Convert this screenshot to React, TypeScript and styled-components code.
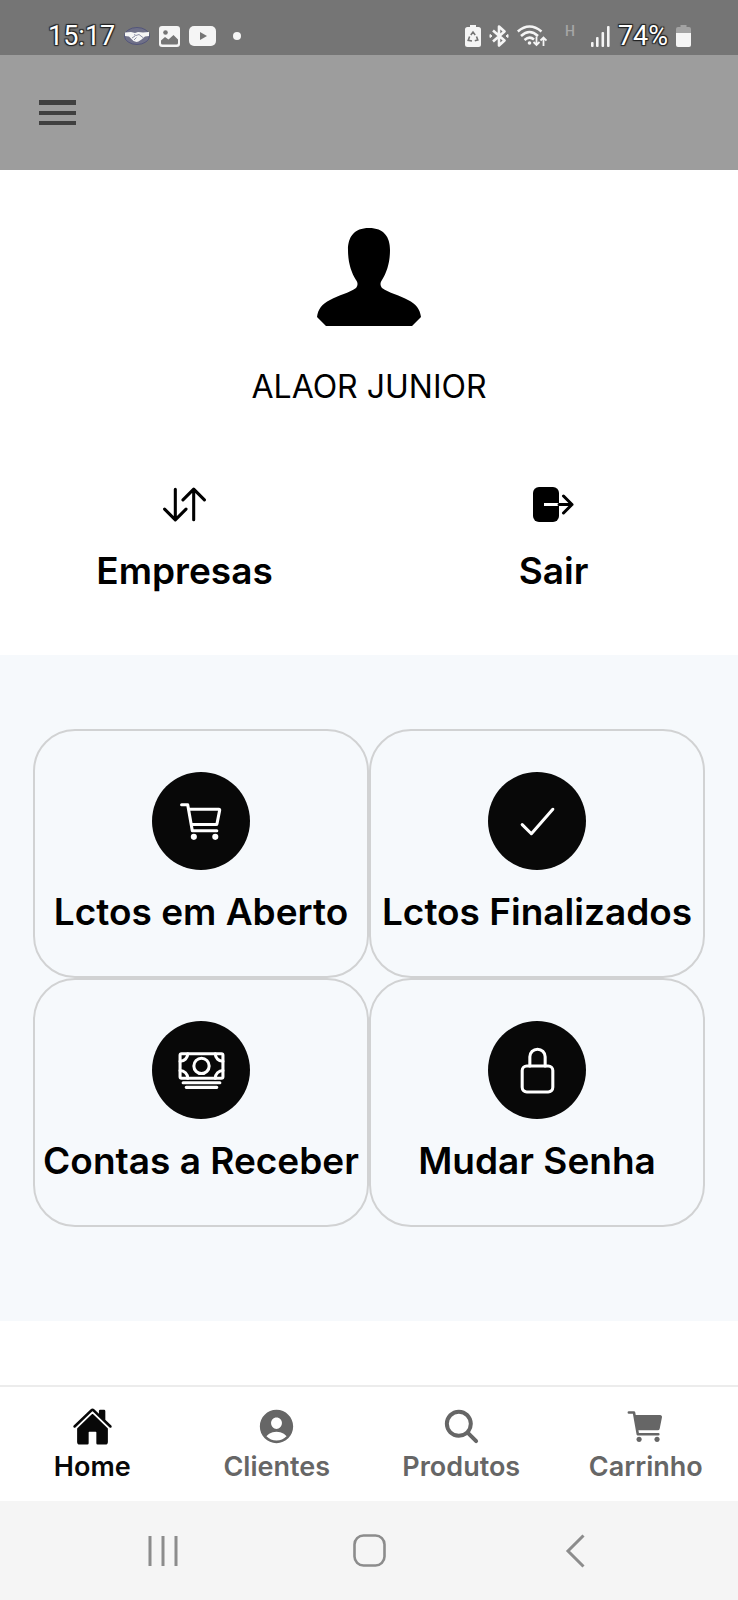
import React from 'react';
import styled, { createGlobalStyle } from 'styled-components';
import {
  IoCart,
  IoCartOutline,
  IoCashOutline,
  IoCheckmarkOutline,
  IoHome,
  IoLockClosedOutline,
  IoPersonCircle,
  IoSearch,
  IoSwapVertical,
} from 'react-icons/io5';

const GlobalStyle = createGlobalStyle`
  *, *::before, *::after { box-sizing: border-box; }
  body { margin: 0; background: #fff; font-family: Inter, Roboto, sans-serif; color: #000; }
  button { font: inherit; color: inherit; background: none; border: 0; padding: 0; margin: 0; cursor: pointer; }
  svg { display: block; flex-shrink: 0; }
`;

const Screen = styled.div`
  display: flex;
  flex-direction: column;
  min-height: 100vh;
`;

const StatusBar = styled.div`
  display: flex;
  justify-content: space-between;
  align-items: flex-end;
  height: 55px;
  padding: 0 47px 4px 48px;
  background: #757575;
  color: #f5f5f5;
`;

const StatusGroup = styled.div<{ $gap: number }>`
  display: flex;
  align-items: center;
  gap: ${({ $gap }) => $gap}px;
  height: 30px;
`;

const StatusText = styled.span`
  font: 400 27px/30px Roboto, sans-serif;
  color: #fff;
  text-shadow: 1px 1px 1px #222, -1px -1px 1px #222, 1px -1px 1px #222, -1px 1px 1px #222;
`;

const NetworkType = styled.span`
  align-self: flex-start;
  padding: 0 8px 0 10px;
  font: 500 14px/20px Roboto, sans-serif;
  color: #a6a6a6;
`;

const MoreDot = styled.span`
  width: 8px;
  height: 8px;
  margin-left: 8px;
  border-radius: 50%;
  background: #f5f5f5;
`;

const Header = styled.header`
  display: flex;
  align-items: center;
  height: 115px;
  padding: 0 39px;
  background: #9d9d9d;
  color: #404040;
`;

const Profile = styled.section`
  display: flex;
  flex-direction: column;
  align-items: center;
  padding-top: 58px;
`;

const UserName = styled.h1`
  margin: 41px 0 0;
  font-size: 32px;
  line-height: 40px;
  font-weight: 400;
`;

const ProfileActions = styled.div`
  display: flex;
  align-self: stretch;
  margin-top: 73px;
  padding-bottom: 62px;
`;

const ActionButton = styled.button`
  display: flex;
  flex: 1;
  flex-direction: column;
  align-items: center;
  gap: 20px;
`;

const Label = styled.span`
  font-size: 37px;
  line-height: 44px;
  font-weight: 600;
  white-space: nowrap;
`;

const Shortcuts = styled.section`
  display: grid;
  grid-template-columns: 1fr 1fr;
  padding: 74px 33px 94px;
  background: #f6f9fc;
`;

const ShortcutCard = styled.button`
  display: flex;
  flex-direction: column;
  align-items: center;
  gap: 20px;
  min-width: 0;
  && {
    padding: 41px 0 42px;
    border: 2px solid #d1d2d3;
  }
  border-radius: 42px;
`;

const IconCircle = styled.span`
  display: flex;
  align-items: center;
  justify-content: center;
  width: 98px;
  height: 98px;
  border-radius: 50%;
  background: #080808;
  color: #fff;
`;

const TabBar = styled.nav`
  display: flex;
  height: 116px;
  margin-top: auto;
  border-top: 2px solid #ececec;
`;

const Tab = styled.button<{ $active?: boolean }>`
  display: flex;
  flex: 1;
  flex-direction: column;
  align-items: center;
  && {
    padding-top: 19px;
    color: ${({ $active }) => ($active ? '#080808' : '#666')};
  }
`;

const TabLabel = styled.span`
  font-size: 27px;
  line-height: 40px;
  font-weight: 600;
`;

const SystemBar = styled.div`
  display: flex;
  height: 99px;
  padding: 0 60px;
  background: #f5f5f5;
`;

const SystemButton = styled.button`
  display: flex;
  flex: 1;
  align-items: center;
  justify-content: center;
`;

const HandshakeIcon = () => (
  <svg width="26" height="18" viewBox="0 0 26 18">
    <ellipse cx="13" cy="9" rx="12.5" ry="8.5" fill="#6f7088" stroke="#53557a" />
    <path d="M1 5.500 7 5l4 1 3-1 5 .6 6-.6v4l-4 .5-3.500 3-3 2-2 .5-3-1-3-3L5 9.500l-4-.5z" fill="#f5f5f5" />
    <path d="m8 11 3-2m-1 4 2.500-2.500M10 7.500l2 1 3-1 4.500 3.500" fill="none" stroke="#8f91a8" />
  </svg>
);

const PictureIcon = () => (
  <svg width="21" height="21" viewBox="0 0 21 21">
    <rect width="21" height="21" rx="3" fill="#f5f5f5" />
    <circle cx="6.5" cy="6.5" r="2.3" fill="#757575" />
    <path d="M2 17v-2.500l4-3.500 3.500 2.500L14.500 9l4.500 4.500V17q0 1.500-1.500 1.500h-14Q2 18.500 2 17z" fill="#757575" />
  </svg>
);

const VideoIcon = () => (
  <svg width="27" height="20" viewBox="0 0 27 20">
    <rect width="27" height="20" rx="5" fill="#f5f5f5" />
    <path d="m11 6 7 4-7 4z" fill="#757575" />
  </svg>
);

const RecycleBatteryIcon = () => (
  <svg width="16" height="22" viewBox="0 0 16 22">
    <path d="M5 0h6v2h2.500Q16 2 16 4.500v15q0 2.500-2.500 2.500h-11Q0 22 0 19.500v-15Q0 2 2.500 2H5z" fill="#f5f5f5" />
    <path d="M5.800 10 8 7l2.200 3M11.500 11.500l1.300 3.500-3 .8M7 16l-3.800-.6 1.400-4" fill="none" stroke="#757575" strokeWidth="1.6" />
  </svg>
);

const BluetoothIcon = () => (
  <svg width="20" height="22" viewBox="0 0 20 22" fill="none" stroke="#f5f5f5" strokeWidth="2.6">
    <path d="m4 5.500 11.500 10L10 20.500v-19l5.500 5L4 16.500" strokeLinejoin="round" />
    <path d="M1 9.500 3 11l-2 1.500zM19 9.500 17 11l2 1.500z" strokeWidth="1" fill="#f5f5f5" />
  </svg>
);

const WifiIcon = () => (
  <svg width="30" height="22" viewBox="0 0 30 22" fill="none" stroke="#f5f5f5" strokeWidth="2.5">
    <path d="M.8 6.500Q12.500-3.500 24.500 6.500M4 11Q12.500 3 21 11M7.500 15q5-4.500 9.500-.5" />
    <circle cx="12.5" cy="18" r="1.8" fill="#f5f5f5" stroke="none" />
    <path d="M19.500 11.500V20m-3-3 3 3 3-3M26.500 21v-8.500m-3 3 3-3 3 3" strokeWidth="1.8" />
  </svg>
);

const SignalIcon = () => (
  <svg width="19" height="21" viewBox="0 0 19 21" fill="#f5f5f5">
    <rect y="16" width="2.6" height="5" rx="1" />
    <rect x="5" y="11" width="2.6" height="10" rx="1" />
    <rect x="10.5" y="6" width="2.6" height="15" rx="1" />
    <rect x="16" width="2.6" height="21" rx="1" />
  </svg>
);

const BatteryIcon = () => (
  <svg width="15" height="22" viewBox="0 0 15 22">
    <path d="M4.500 0h6v2H13q2 0 2 2v5H0V4q0-2 2-2h2.500z" fill="#a3a3a3" />
    <path d="M0 8h15v12q0 2-2 2H2q-2 0-2-2z" fill="#f5f5f5" />
  </svg>
);

const MenuIcon = () => (
  <svg width="37" height="26" viewBox="0 0 37 26" fill="currentColor">
    <rect width="37" height="5" />
    <rect y="11" width="37" height="4" />
    <rect y="21" width="37" height="4" />
  </svg>
);

const AvatarIcon = () => (
  <svg width="104" height="98" viewBox="0 0 104 98">
    <path d="M52 0C67 0 73 9 73 22c0 12-3 22-8 30-2 3-2 5 0 8 7 5 17 7 26 12 8 4 12 9 13 17l-9 9H9l-9-9c1-8 5-13 13-17 9-5 19-7 26-12 2-3 2-5 0-8-5-8-8-18-8-30C31 9 37 0 52 0z" />
  </svg>
);

const ExitIcon = () => (
  <svg width="41" height="49" viewBox="0 0 41 49">
    <rect y="7" width="26" height="35" rx="6" />
    <path d="M11 24.500h15" stroke="#fff" strokeWidth="3" />
    <path d="M26 24.500h13M30.500 16l8.500 8.500-8.500 8.500" fill="none" stroke="#000" strokeWidth="3" strokeLinecap="round" strokeLinejoin="round" />
  </svg>
);

const RecentsIcon = () => (
  <svg width="30" height="32" viewBox="0 0 30 32" stroke="#8c8c8c" strokeWidth="3">
    <path d="M2 1v30M15 1v30M28 1v30" />
  </svg>
);

const HomeKeyIcon = () => (
  <svg width="33" height="33" viewBox="0 0 33 33">
    <rect x="1.5" y="1.5" width="30" height="30" rx="9" fill="none" stroke="#8c8c8c" strokeWidth="2.6" />
  </svg>
);

const BackIcon = () => (
  <svg width="20" height="34" viewBox="0 0 20 34">
    <path d="M18.500 1.500 3 17l15.500 15.500" fill="none" stroke="#8c8c8c" strokeWidth="3" />
  </svg>
);

const shortcuts = [
  { label: 'Lctos em Aberto', Icon: IoCartOutline },
  { label: 'Lctos Finalizados', Icon: IoCheckmarkOutline },
  { label: 'Contas a Receber', Icon: IoCashOutline },
  { label: 'Mudar Senha', Icon: IoLockClosedOutline },
];

const tabs = [
  { label: 'Home', Icon: IoHome, active: true },
  { label: 'Clientes', Icon: IoPersonCircle },
  { label: 'Produtos', Icon: IoSearch },
  { label: 'Carrinho', Icon: IoCart },
];

export default function App() {
  return (
    <Screen>
      <GlobalStyle />
      <StatusBar>
        <StatusGroup $gap={9}>
          <StatusText>15:17</StatusText>
          <HandshakeIcon />
          <PictureIcon />
          <VideoIcon />
          <MoreDot />
        </StatusGroup>
        <StatusGroup $gap={8}>
          <RecycleBatteryIcon />
          <BluetoothIcon />
          <WifiIcon />
          <NetworkType>H</NetworkType>
          <SignalIcon />
          <StatusText>74%</StatusText>
          <BatteryIcon />
        </StatusGroup>
      </StatusBar>

      <Header>
        <button type="button" aria-label="Menu">
          <MenuIcon />
        </button>
      </Header>

      <main>
        <Profile>
          <AvatarIcon />
          <UserName>ALAOR JUNIOR</UserName>
          <ProfileActions>
            <ActionButton type="button">
              <IoSwapVertical size={49} />
              <Label>Empresas</Label>
            </ActionButton>
            <ActionButton type="button">
              <ExitIcon />
              <Label>Sair</Label>
            </ActionButton>
          </ProfileActions>
        </Profile>

        <Shortcuts>
          {shortcuts.map(({ label, Icon }) => (
            <ShortcutCard type="button" key={label}>
              <IconCircle>
                <Icon size={49} />
              </IconCircle>
              <Label>{label}</Label>
            </ShortcutCard>
          ))}
        </Shortcuts>
      </main>

      <TabBar>
        {tabs.map(({ label, Icon, active }) => (
          <Tab type="button" key={label} $active={active}>
            <Icon size={41} />
            <TabLabel>{label}</TabLabel>
          </Tab>
        ))}
      </TabBar>

      <SystemBar>
        <SystemButton type="button" aria-label="Recentes">
          <RecentsIcon />
        </SystemButton>
        <SystemButton type="button" aria-label="Início">
          <HomeKeyIcon />
        </SystemButton>
        <SystemButton type="button" aria-label="Voltar">
          <BackIcon />
        </SystemButton>
      </SystemBar>
    </Screen>
  );
}
